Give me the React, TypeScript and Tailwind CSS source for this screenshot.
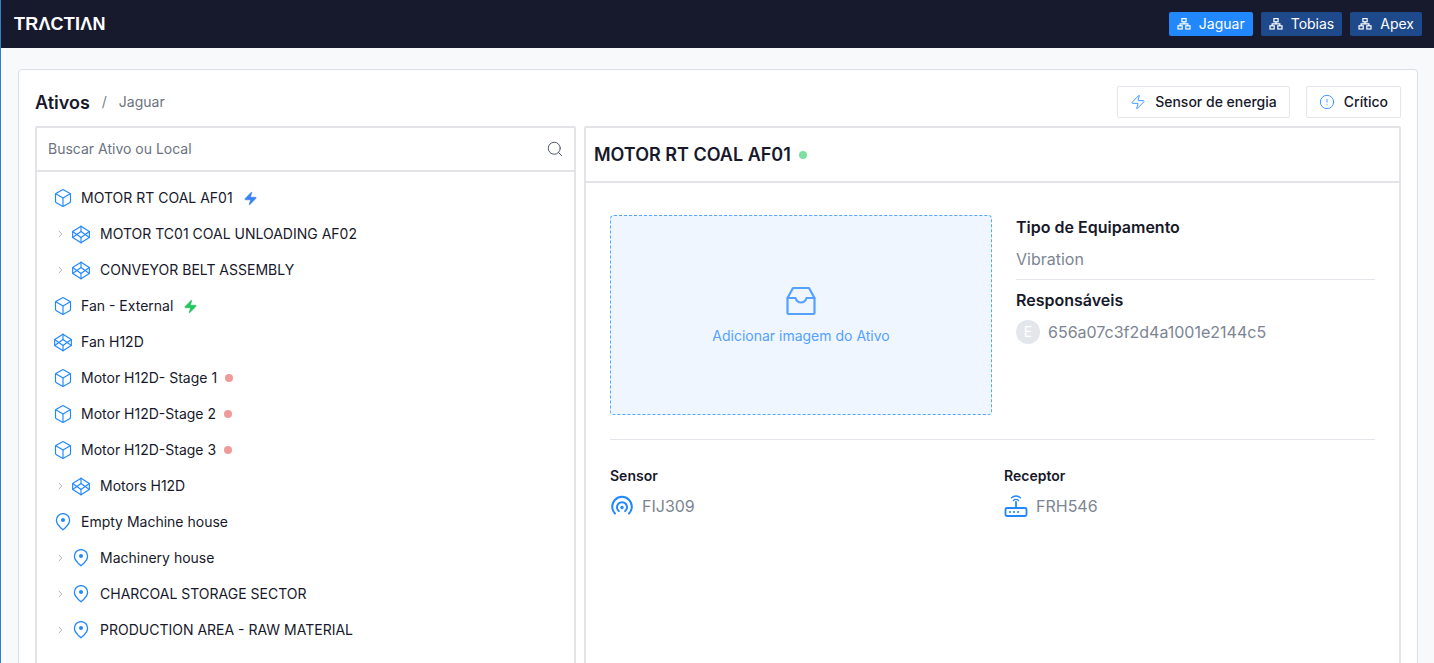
import React from "react";
import { ChevronRight, Search, Zap, Box, Codepen, CircleAlert } from "lucide-react";

const Net = () => (
  <svg width="14" height="14" viewBox="0 0 14 14" fill="none" stroke="currentColor" strokeWidth="1.2">
    <rect x="4.9" y="1.6" width="4.2" height="3.2" />
    <rect x="1" y="8.8" width="4.2" height="3.2" />
    <rect x="8.8" y="8.8" width="4.2" height="3.2" />
    <path d="M3.1 8.8V6.8H10.9V8.8M7 4.8V6.8" />
  </svg>
);

const Pin = ({ className = "" }: { className?: string }) => (
  <svg className={className} width="16" height="18" viewBox="0 0 16 18" fill="none">
    <path d="M8 16.8C8 16.8 14.6 11.3 14.6 7.2A6.6 6.6 0 0 0 1.4 7.2C1.4 11.3 8 16.8 8 16.8Z" stroke="#2188ff" strokeWidth="1.3" strokeLinejoin="round" />
    <circle cx="8" cy="7" r="2" fill="#2188ff" />
  </svg>
);

type Row = { t: string; kind: "box" | "code" | "pin"; arrow?: boolean; bolt?: string; dot?: boolean };
const rows: Row[] = [
  { t: "MOTOR RT COAL AF01", kind: "box", bolt: "#3b82f6" },
  { t: "MOTOR TC01 COAL UNLOADING AF02", kind: "code", arrow: true },
  { t: "CONVEYOR BELT ASSEMBLY", kind: "code", arrow: true },
  { t: "Fan - External", kind: "box", bolt: "#22c55e" },
  { t: "Fan H12D", kind: "code" },
  { t: "Motor H12D- Stage 1", kind: "box", dot: true },
  { t: "Motor H12D-Stage 2", kind: "box", dot: true },
  { t: "Motor H12D-Stage 3", kind: "box", dot: true },
  { t: "Motors H12D", kind: "code", arrow: true },
  { t: "Empty Machine house", kind: "pin" },
  { t: "Machinery house", kind: "pin", arrow: true },
  { t: "CHARCOAL STORAGE SECTOR", kind: "pin", arrow: true },
  { t: "PRODUCTION AREA - RAW MATERIAL", kind: "pin", arrow: true },
];

const TreeRow = ({ r }: { r: Row }) => (
  <div className="flex h-9 items-center text-sm text-[#17192b]">
    {r.arrow ? (
      <div className="flex w-[36px] shrink-0 items-center justify-end gap-[5px] ml-[18px]">
        <ChevronRight size={14} strokeWidth={1.2} className="text-[#6b7280]" />
        <div className="flex w-[20px] shrink-0 justify-center"><TreeIcon kind={r.kind} /></div>
      </div>
    ) : (
      <div className="flex w-[20px] shrink-0 justify-center ml-[16px]"><TreeIcon kind={r.kind} /></div>
    )}
    <span className={r.arrow ? "ml-[9px]" : "ml-[8px]"}>{r.t}</span>
    {r.bolt && <Zap size={15} strokeWidth={1} className="ml-[10px]" style={{ color: r.bolt, fill: r.bolt }} />}
    {r.dot && <span className="ml-[8px] size-2 rounded-full bg-[#f19a9a]" />}
  </div>
);

const TreeIcon = ({ kind }: { kind: Row["kind"] }) =>
  kind === "box" ? (
    <Box size={20} strokeWidth={1.4} className="text-[#2188ff]" />
  ) : kind === "code" ? (
    <Codepen size={21} strokeWidth={1.4} className="text-[#2188ff]" />
  ) : (
    <Pin />
  );

export default function App() {
  return (
    <div className="flex h-[663px] flex-col overflow-hidden border-l border-[#2f80c8] bg-[#f8f9fb] text-[#17192b] [font-family:Inter,sans-serif]">
      <header className="flex h-12 shrink-0 items-center justify-between bg-[#17192d] pl-[13px] pr-3">
        <span className="text-[18px] font-bold tracking-[0.2px] text-white [font-family:'Liberation_Sans',sans-serif]">TRΛCTIΛN</span>
        <div className="flex gap-2 text-sm text-white">
          {["Jaguar", "Tobias", "Apex"].map((n, i) => (
            <div key={n} className={`flex h-6 items-center gap-2 rounded-[2px] px-2 ${i === 0 ? "bg-[#2188ff]" : "bg-[#1e4a8c]"}`}>
              <Net />
              <span>{n}</span>
            </div>
          ))}
        </div>
      </header>
      <main className="flex min-h-0 flex-1 flex-col pl-[17px] pr-[16px] pt-[21px]">
        <div className="flex h-[640px] shrink-0 flex-col rounded-[4px] border border-[#d8dfe6] bg-white px-4 pt-4">
          <div className="flex h-8 items-center justify-between pr-0">
            <div className="flex items-center">
              <span className="text-[18px] font-semibold">Ativos</span>
              <span className="ml-3 text-sm text-[#77818c]">/</span>
              <span className="ml-3 text-sm text-[#6b7280]">Jaguar</span>
            </div>
            <div className="flex gap-4">
              <div className="flex h-8 items-center gap-[9px] rounded-[2px] border border-[#e3e6ea] px-3 text-sm font-medium">
                <Zap size={16} strokeWidth={1.3} className="text-[#2188ff]" />
                Sensor de energia
              </div>
              <div className="flex h-8 items-center gap-[9px] rounded-[2px] border border-[#e3e6ea] px-3 text-sm font-medium">
                <CircleAlert size={16} strokeWidth={1.3} className="text-[#2188ff]" />
                Crítico
              </div>
            </div>
          </div>
          <div className="mt-2 flex min-h-0 flex-1 gap-2">
            <section className="w-[541px] shrink-0 rounded-[2px] border-2 border-[#e3e3e8]">
              <div className="flex h-[44px] items-center justify-between border-b-2 border-[#e3e3e8] pl-[11px] pr-[10px]">
                <span className="text-sm text-[#6b7280]">Buscar Ativo ou Local</span>
                <Search size={18} strokeWidth={1.3} className="text-[#4b5563]" />
              </div>
              <div className="pt-[8px]">
                {rows.map((r) => <TreeRow key={r.t} r={r} />)}
              </div>
            </section>
            <section className="min-w-0 flex-1 rounded-[2px] border-2 border-[#e3e3e8]">
              <div className="flex h-[55px] items-center gap-2 border-b-2 border-[#e3e3e8] pl-2">
                <span className="text-[18px] font-semibold">MOTOR RT COAL AF01</span>
                <span className="size-2 rounded-full bg-[#7de0a0]" />
              </div>
              <div className="px-6 pt-8">
                <div className="flex gap-6 border-b border-[#e3e6ea] pb-6">
                  <div className="flex h-[200px] w-[382px] shrink-0 flex-col items-center justify-center rounded-[4px] border border-dashed border-[#55a6ff] bg-[#eff6ff]">
                    <svg width="32" height="32" viewBox="0 0 32 32" fill="none" stroke="#55a1ff" strokeWidth="2.2" strokeLinejoin="round" strokeLinecap="round">
                      <path d="M8 3H24L29.5 13V28A1 1 0 0 1 28.5 29H3.5A1 1 0 0 1 2.5 28V13Z" />
                      <path d="M2.5 13H10.5C11.5 16 13 17.5 16 17.5S20.500 16 21.500 13H29.500" />
                    </svg>
                    <span className="mt-[9px] text-sm text-[#55a1ff]">Adicionar imagem do Ativo</span>
                  </div>
                  <div className="min-w-0 flex-1">
                    <div className="text-base font-semibold leading-6">Tipo de Equipamento</div>
                    <div className="mt-2 border-b border-[#e3e6ea] pb-2 text-base leading-6 text-[#7c8592]">Vibration</div>
                    <div className="mt-2 text-base font-semibold leading-6">Responsáveis</div>
                    <div className="mt-2 flex items-center gap-2 text-base leading-6 text-[#7c8592]">
                      <span className="flex size-6 items-center justify-center rounded-full bg-[#e3e6ea] text-sm text-white">E</span>
                      656a07c3f2d4a1001e2144c5
                    </div>
                  </div>
                </div>
                <div className="mt-[26px] grid grid-cols-[394px_1fr]">
                  <div>
                    <div className="text-sm font-semibold leading-5">Sensor</div>
                    <div className="mt-[8px] flex items-center gap-2 text-base leading-6 text-[#7c8592]">
                      <svg width="24" height="24" viewBox="0 0 24 24" fill="none" stroke="#2188ff" strokeWidth="2" strokeLinecap="round">
                        <path d="M5 19.500A9.800 9.800 0 1 1 19 19.500" />
                        <path d="M8.800 17A5 5 0 1 1 15.200 17" />
                        <circle cx="12" cy="13.500" r="1.700" fill="#2188ff" stroke="none" />
                      </svg>
                      FIJ309
                    </div>
                  </div>
                  <div>
                    <div className="text-sm font-semibold leading-5">Receptor</div>
                    <div className="mt-[8px] flex items-center gap-2 text-base leading-6 text-[#7c8592]">
                      <svg width="24" height="24" viewBox="0 0 24 24" fill="none" stroke="#2188ff" strokeWidth="1.800" strokeLinecap="round">
                        <rect x="1.500" y="14" width="21" height="8" rx="1.500" />
                        <path d="M12 14V8" />
                        <path d="M9.500 6.500A3.500 3.500 0 0 1 14.500 6.500" strokeWidth="1.300" />
                        <path d="M7.500 3.800A6.500 6.500 0 0 1 16.500 3.800" strokeWidth="1.300" />
                        <path d="M6 18H6.100M10 18H10.100M14 18H14.100" strokeWidth="2" />
                      </svg>
                      FRH546
                    </div>
                  </div>
                </div>
              </div>
            </section>
          </div>
        </div>
      </main>
    </div>
  );
}
